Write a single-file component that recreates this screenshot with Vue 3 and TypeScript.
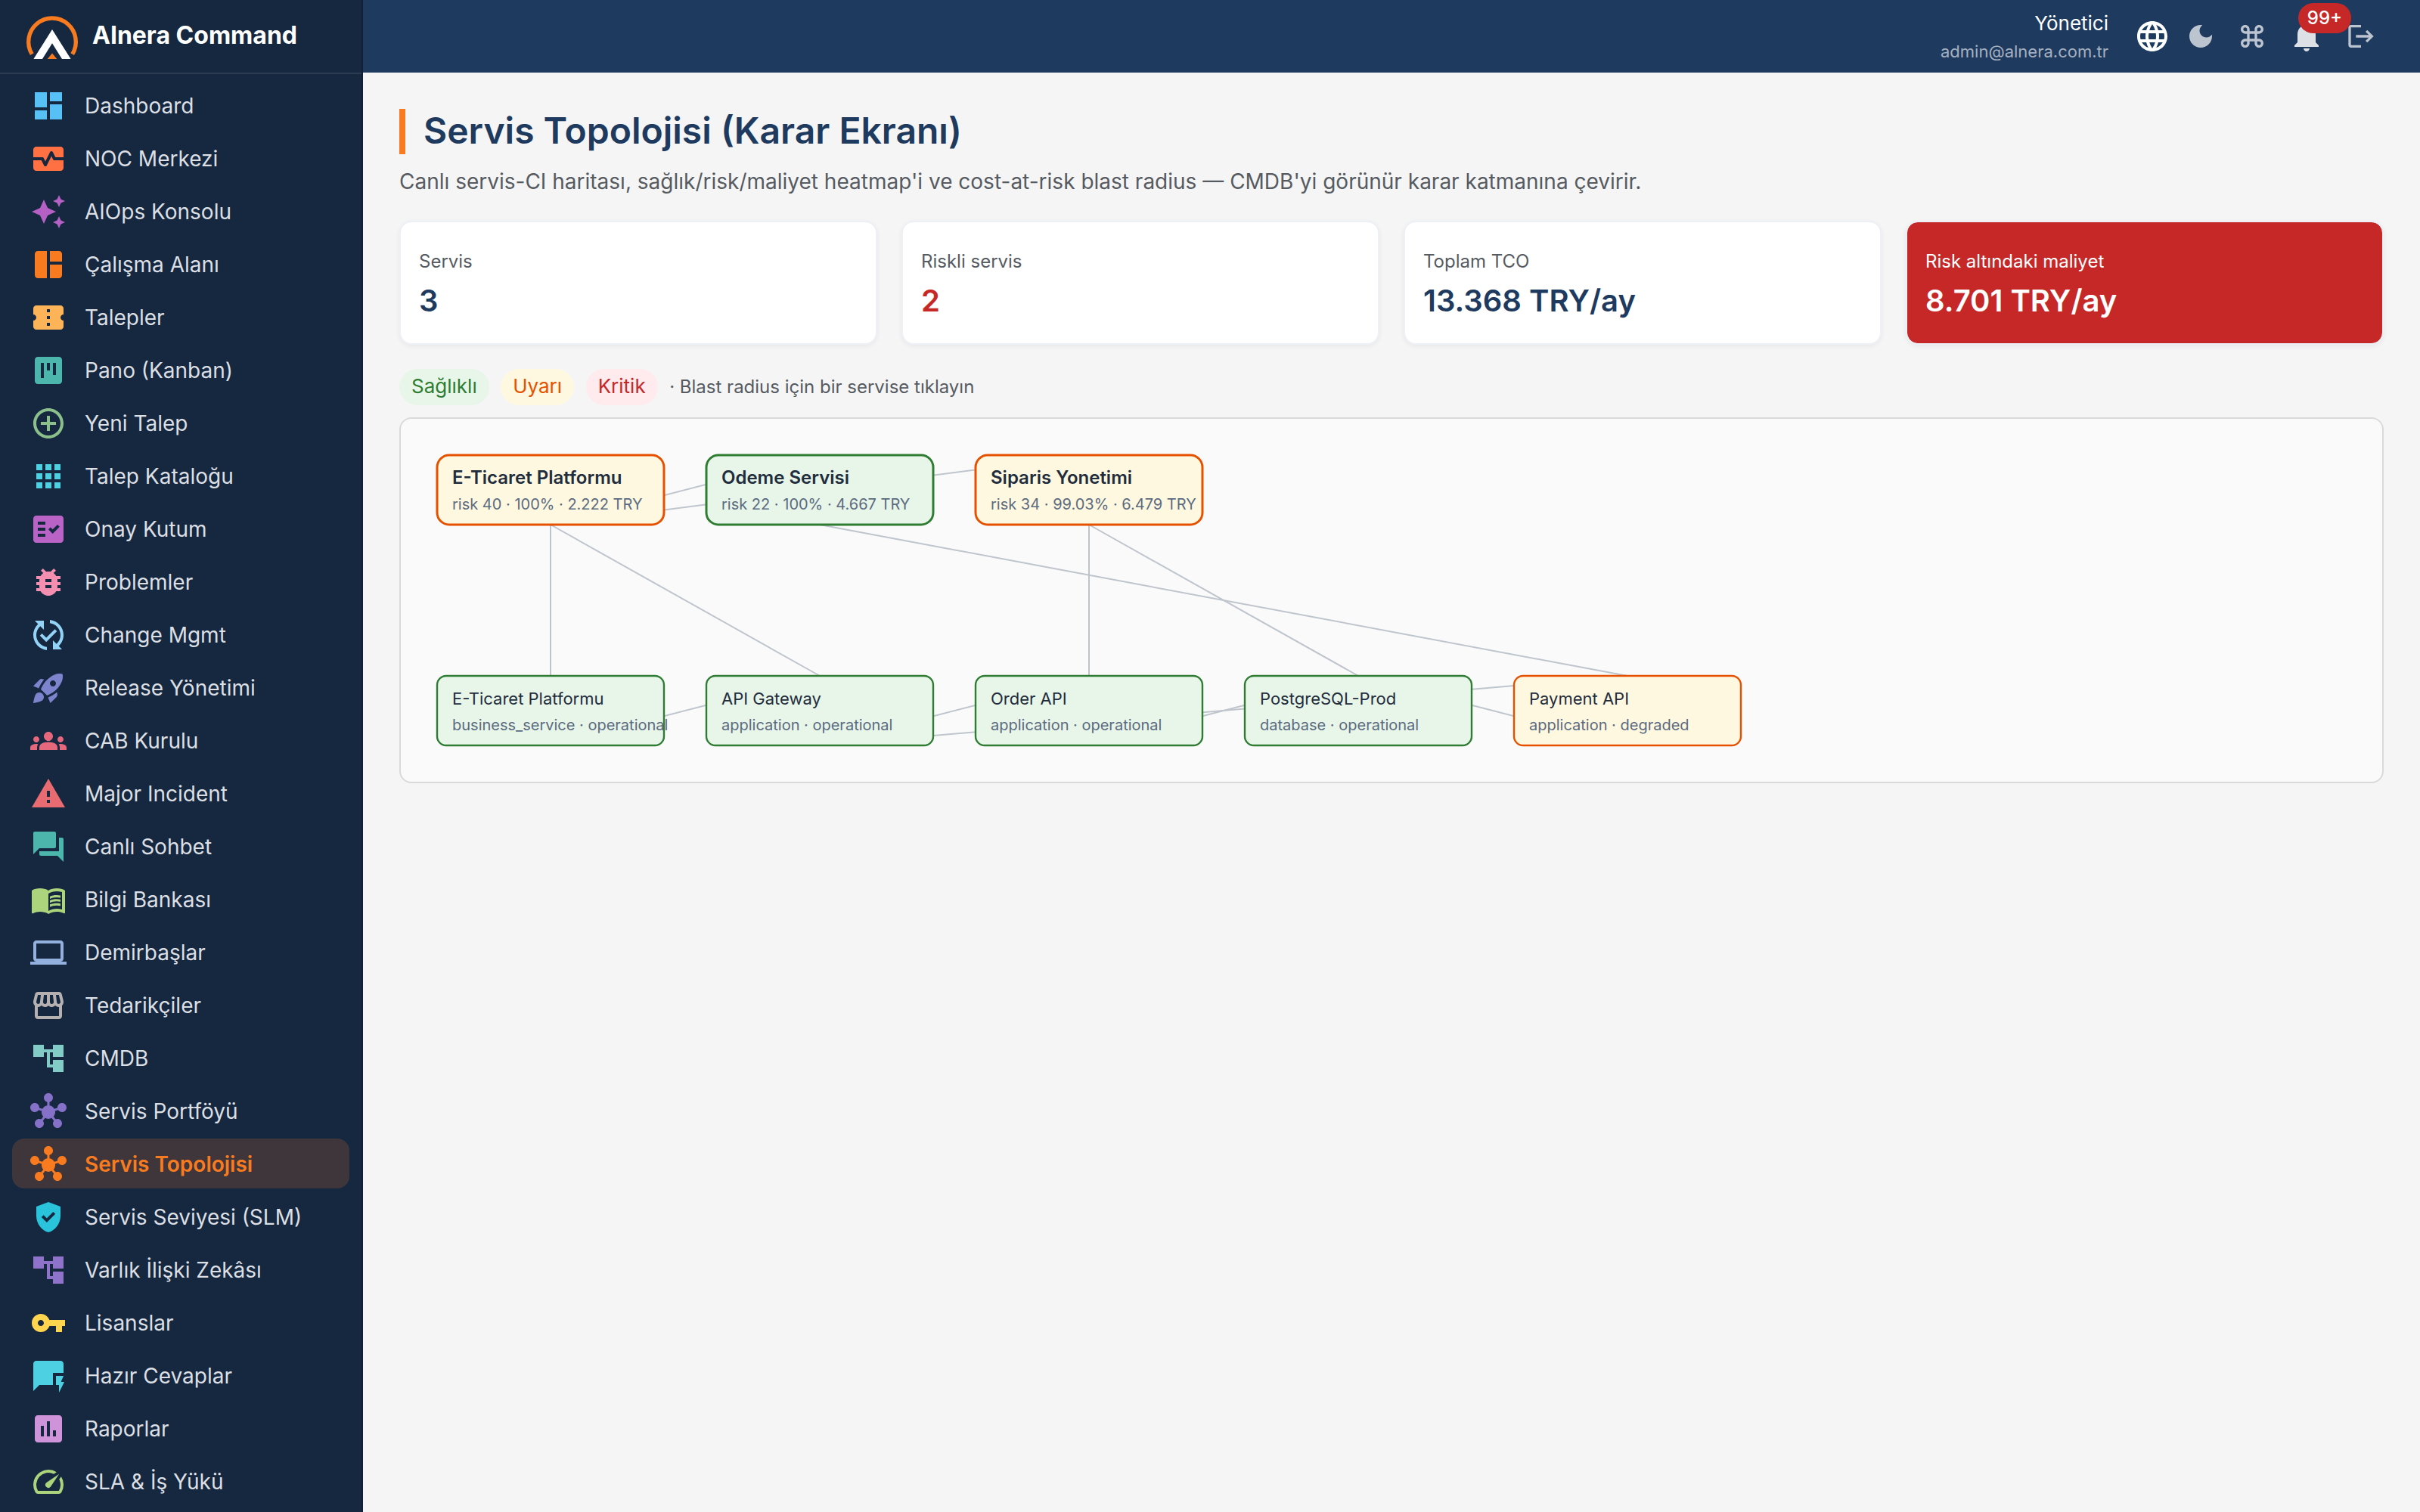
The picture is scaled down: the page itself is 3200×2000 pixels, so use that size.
<script setup lang="ts">
interface MenuItem {
  label: string
  color: string
  icon: string
  active?: boolean
}

interface Kpi {
  label: string
  value: string
  tone: string
}

interface TopologyNode {
  id: string
  name: string
  detail: string
  health: 'ok' | 'warn'
  kind: 'service' | 'ci'
  col: number
}

const HUB =
  'M8.4 18.2c.38.5.6 1.12.6 1.8 0 1.66-1.34 3-3 3s-3-1.34-3-3 1.34-3 3-3c.44 0 .85.09 1.23.26l1.41-1.77c-.92-1.03-1.29-2.39-1.09-3.69l-2.03-.68c-.54.83-1.46 1.38-2.52 1.38-1.66 0-3-1.34-3-3s1.34-3 3-3 3 1.34 3 3c0 .07 0 .14-.01.21l2.03.68c.64-1.21 1.82-2.09 3.22-2.32V5.91C9.96 5.57 9 4.4 9 3c0-1.66 1.34-3 3-3s3 1.34 3 3c0 1.4-.96 2.57-2.25 2.91v2.16c1.4.23 2.58 1.11 3.22 2.32l2.03-.68C18 9.64 18 9.57 18 9.5c0-1.66 1.34-3 3-3s3 1.34 3 3-1.34 3-3 3c-1.06 0-1.98-.55-2.52-1.37l-2.03.68c.2 1.29-.16 2.65-1.09 3.69l1.41 1.77c.38-.18.79-.27 1.23-.27 1.66 0 3 1.34 3 3s-1.34 3-3 3-3-1.34-3-3c0-.68.22-1.3.6-1.8l-1.41-1.77c-1.35.75-3.01.76-4.37 0L8.4 18.2z'
const TREE = 'M22 11V3h-7v3H9V3H2v8h7V8h2v10h4v3h7v-8h-7v3h-2V8h2v3z'

const menu: MenuItem[] = [
  { label: 'Dashboard', color: '#57c1f6', icon: 'M3 13h8V3H3v10zm0 8h8v-6H3v6zm10 0h8V11h-8v10zm0-18v6h8V3h-8z' },
  { label: 'NOC Merkezi', color: '#ff7043', icon: 'M15.11 12.45 14 10.24l-3.11 6.21c-.16.34-.51.55-.89.55s-.73-.21-.89-.55L7.38 13H2v5c0 1.1.9 2 2 2h16c1.1 0 2-.9 2-2v-5h-6c-.38 0-.73-.21-.89-.55zM20 4H4c-1.1 0-2 .9-2 2v5h6c.38 0 .73.21.89.55L10 13.76l3.11-6.21c.34-.68 1.45-.68 1.79 0L16.62 11H22V6c0-1.1-.9-2-2-2z' },
  { label: 'AIOps Konsolu', color: '#b560c4', icon: 'm19 9 1.25-2.75L23 5l-2.75-1.25L19 1l-1.25 2.75L15 5l2.75 1.25L19 9zm-7.5.5L9 4 6.5 9.5 1 12l5.5 2.5L9 20l2.5-5.5L17 12l-5.5-2.5zM19 15l-1.25 2.75L15 19l2.75 1.25L19 23l1.25-2.75L23 19l-2.75-1.25L19 15z' },
  { label: 'Çalışma Alanı', color: '#f97b1f', icon: 'M11 21H5c-1.1 0-2-.9-2-2V5c0-1.1.9-2 2-2h6v18zm2 0h6c1.1 0 2-.9 2-2v-7h-8v9zm8-11V5c0-1.1-.9-2-2-2h-6v7h8z' },
  { label: 'Talepler', color: '#fdb357', icon: 'M22 10V6c0-1.11-.9-2-2-2H4c-1.1 0-1.99.89-1.99 2v4c1.1 0 1.99.9 1.99 2s-.89 2-2 2v4c0 1.1.9 2 2 2h16c1.1 0 2-.9 2-2v-4c-1.1 0-2-.9-2-2s.9-2 2-2zm-9 7.5h-2v-2h2v2zm0-4.5h-2v-2h2v2zm0-4.5h-2v-2h2v2z' },
  { label: 'Pano (Kanban)', color: '#4db6ac', icon: 'M19 3H5c-1.1 0-2 .9-2 2v14c0 1.1.9 2 2 2h14c1.1 0 2-.9 2-2V5c0-1.1-.9-2-2-2zM9 17H7V7h2v10zm4-5h-2V7h2v5zm4 3h-2V7h2v8z' },
  { label: 'Yeni Talep', color: '#8bc08a', icon: 'M13 7h-2v4H7v2h4v4h2v-4h4v-2h-4V7zm-1-5C6.48 2 2 6.48 2 12s4.48 10 10 10 10-4.48 10-10S17.52 2 12 2zm0 18c-4.41 0-8-3.59-8-8s3.59-8 8-8 8 3.59 8 8-3.59 8-8 8z' },
  { label: 'Talep Kataloğu', color: '#4dd0e1', icon: 'M4 8h4V4H4v4zm6 12h4v-4h-4v4zm-6 0h4v-4H4v4zm0-6h4v-4H4v4zm6 0h4v-4h-4v4zm6-10v4h4V4h-4zm-6 4h4V4h-4v4zm6 6h4v-4h-4v4zm0 6h4v-4h-4v4z' },
  { label: 'Onay Kutum', color: '#ba63c6', icon: 'M20 3H4c-1.1 0-2 .9-2 2v14c0 1.1.9 2 2 2h16c1.1 0 2-.9 2-2V5c0-1.1-.9-2-2-2zM10 17H5v-2h5v2zm0-4H5v-2h5v2zm0-4H5V7h5v2zm4.82 6L12 12.16l1.41-1.41 1.41 1.42L17.99 9l1.42 1.42L14.82 15z' },
  { label: 'Problemler', color: '#f48fb1', icon: 'M20 8h-2.81c-.45-.78-1.07-1.45-1.82-1.96L17 4.41 15.59 3l-2.17 2.17C12.96 5.06 12.49 5 12 5c-.49 0-.96.06-1.41.17L8.41 3 7 4.41l1.62 1.63C7.88 6.55 7.26 7.22 6.81 8H4v2h2.09c-.05.33-.09.66-.09 1v1H4v2h2v1c0 .34.04.67.09 1H4v2h2.81c1.04 1.79 2.97 3 5.19 3s4.15-1.21 5.19-3H20v-2h-2.09c.05-.33.09-.66.09-1v-1h2v-2h-2v-1c0-.34-.04-.67-.09-1H20V8zm-6 8h-4v-2h4v2zm0-4h-4v-2h4v2z' },
  { label: 'Change Mgmt', color: '#93d3f6', icon: 'm17.66 9.53-7.07 7.07-4.24-4.24 1.41-1.41 2.83 2.83 5.66-5.66 1.41 1.41zM4 12c0-2.33 1.02-4.42 2.62-5.88L9 8.5v-6H3l2.2 2.2C3.24 6.52 2 9.11 2 12c0 5.19 3.95 9.45 9 9.95v-2.02c-3.94-.49-7-3.86-7-7.93zm18 0c0-5.19-3.95-9.45-9-9.95v2.02c3.94.49 7 3.86 7 7.93 0 2.33-1.02 4.42-2.62 5.88L15 15.5v6h6l-2.2-2.2c1.96-1.82 3.2-4.41 3.2-7.3z' },
  { label: 'Release Yönetimi', color: '#7d83cd', icon: 'M9.19 6.35c-2.04 2.29-3.44 5.58-3.57 5.89L2 10.69l4.05-4.05c.47-.47 1.15-.68 1.81-.55l1.33.26zM11.17 17s3.74-1.55 5.89-3.7c5.4-5.4 4.5-9.62 4.21-10.57-.95-.3-5.17-1.19-10.57 4.21C8.55 9.09 7 12.83 7 12.83L11.17 17zm6.48-2.19c-2.29 2.04-5.58 3.44-5.89 3.57L13.31 22l4.05-4.05c.47-.47.68-1.15.55-1.81l-.26-1.33zM9 18c0 .83-.34 1.58-.88 2.12C6.94 21.3 2 22 2 22s.7-4.94 1.88-6.12C4.42 15.34 5.17 15 6 15c1.66 0 3 1.34 3 3zm4-9c0-1.1.9-2 2-2s2 .9 2 2-.9 2-2 2-2-.9-2-2z' },
  { label: 'CAB Kurulu', color: '#e5687d', icon: 'M12 12.75c1.63 0 3.07.39 4.24.9 1.08.48 1.76 1.56 1.76 2.73V18H6v-1.61c0-1.18.68-2.26 1.76-2.73 1.17-.52 2.61-.91 4.24-.91zM4 13c1.1 0 2-.9 2-2s-.9-2-2-2-2 .9-2 2 .9 2 2 2zm1.13 1.1c-.37-.06-.74-.1-1.13-.1-.99 0-1.93.21-2.78.58C.48 14.9 0 15.62 0 16.43V18h4.5v-1.61c0-.83.23-1.61.63-2.29zM20 13c1.1 0 2-.9 2-2s-.9-2-2-2-2 .9-2 2 .9 2 2 2zm4 3.43c0-.81-.48-1.53-1.22-1.85-.85-.37-1.79-.58-2.78-.58-.39 0-.76.04-1.13.1.4.68.63 1.46.63 2.29V18H24v-1.57zM12 6c1.66 0 3 1.34 3 3s-1.34 3-3 3-3-1.34-3-3 1.34-3 3-3z' },
  { label: 'Major Incident', color: '#e76b70', icon: 'M1 21h22L12 2 1 21zm12-3h-2v-2h2v2zm0-4h-2v-4h2v4z' },
  { label: 'Canlı Sohbet', color: '#4db6ac', icon: 'M21 6h-2v9H6v2c0 .55.45 1 1 1h11l4 4V7c0-.55-.45-1-1-1zM17 12V3c0-.55-.45-1-1-1H3c-.55 0-1 .45-1 1v14l4-4h10c.55 0 1-.45 1-1z' },
  { label: 'Bilgi Bankası', color: '#abd47c', icon: 'M21 5c-1.11-.35-2.33-.5-3.5-.5-1.95 0-4.05.4-5.5 1.5-1.45-1.1-3.55-1.5-5.5-1.5S2.45 4.9 1 6v14.65c0 .25.25.5.5.5.1 0 .15-.05.25-.05C3.1 20.45 5.05 20 6.5 20c1.95 0 4.05.4 5.5 1.5 1.35-.85 3.8-1.5 5.5-1.5 1.65 0 3.35.3 4.75 1.05.1.05.15.05.25.05.25 0 .5-.25.5-.5V6c-.6-.45-1.25-.75-2-1zm0 13.5c-1.1-.35-2.3-.5-3.5-.5-1.7 0-4.15.65-5.5 1.5V8c1.35-.85 3.8-1.5 5.5-1.5 1.2 0 2.4.15 3.5.5v11.5zM17.5 10.5c.88 0 1.73.09 2.5.26V9.24c-.79-.15-1.64-.24-2.5-.24-1.7 0-3.24.29-4.5.83v1.66c1.13-.64 2.7-.99 4.5-.99zM13 12.49v1.66c1.13-.64 2.7-.99 4.5-.99.88 0 1.73.09 2.5.26V11.9c-.79-.15-1.64-.24-2.5-.24-1.7 0-3.24.3-4.5.83zm4.5 1.84c-1.7 0-3.24.29-4.5.83v1.66c1.13-.64 2.7-.99 4.5-.99.88 0 1.73.09 2.5.26v-1.52c-.79-.16-1.64-.24-2.5-.24z' },
  { label: 'Demirbaşlar', color: '#94b0de', icon: 'M20 18c1.1 0 1.99-.9 1.99-2L22 6c0-1.1-.9-2-2-2H4c-1.1 0-2 .9-2 2v10c0 1.1.9 2 2 2H0v2h24v-2h-4zM4 6h16v10H4V6z' },
  { label: 'Tedarikçiler', color: '#b4b1b0', icon: 'M21.9 8.89l-1.05-4.37c-.22-.9-1-1.52-1.91-1.52H5.05c-.9 0-1.69.63-1.9 1.52L2.1 8.89c-.24 1.02-.02 2.06.62 2.88.08.11.19.19.28.29V19c0 1.1.9 2 2 2h14c1.1 0 2-.9 2-2v-6.94c.09-.09.2-.18.28-.28.64-.82.87-1.87.62-2.89zm-2.99-3.9l1.05 4.37c.1.42.01.84-.25 1.17-.14.18-.44.47-.94.47-.61 0-1.14-.49-1.21-1.14L16.98 5l1.93-.01zM13 5h1.96l.54 4.52c.05.39-.07.78-.33 1.07-.22.26-.54.41-.95.41-.67 0-1.22-.59-1.22-1.31V5zM8.49 9.52L9.04 5H11v4.69c0 .72-.55 1.31-1.29 1.31-.34 0-.65-.15-.89-.41-.25-.29-.37-.68-.33-1.07zm-4.45-.16L5.05 5h1.97l-.58 4.86c-.08.65-.6 1.14-1.21 1.14-.49 0-.8-.29-.93-.47-.27-.32-.36-.75-.26-1.17zM5 19v-6.03c.08.01.15.03.23.03.87 0 1.66-.36 2.24-.95.6.6 1.4.95 2.31.95.87 0 1.65-.36 2.23-.93.59.57 1.39.93 2.29.93.84 0 1.64-.35 2.24-.95.58.59 1.37.95 2.24.95.08 0 .15-.02.23-.03V19H5z' },
  { label: 'CMDB', color: '#83cbc6', icon: TREE },
  { label: 'Servis Portföyü', color: '#8671c8', icon: HUB },
  { label: 'Servis Topolojisi', color: '#f97b1f', icon: HUB, active: true },
  { label: 'Servis Seviyesi (SLM)', color: '#29c3dc', icon: 'M12 2 4 5v6.09c0 5.05 3.41 9.76 8 10.91 4.59-1.15 8-5.86 8-10.91V5l-8-3zm-1.06 13.54L7.4 12l1.41-1.41 2.12 2.12 4.24-4.24 1.41 1.41-5.64 5.66z' },
  { label: 'Varlık İlişki Zekâsı', color: '#8f73cb', icon: TREE },
  { label: 'Lisanslar', color: '#ffd54f', icon: 'M12.65 10C11.83 7.67 9.61 6 7 6c-3.31 0-6 2.69-6 6s2.69 6 6 6c2.61 0 4.83-1.67 5.65-4H17v4h4v-4h2v-4H12.65zM7 14c-1.1 0-2-.9-2-2s.9-2 2-2 2 .9 2 2-.9 2-2 2z' },
  { label: 'Hazır Cevaplar', color: '#4dd0e1', icon: 'M22 4c0-1.1-.9-2-2-2H4c-1.1 0-1.99.9-1.99 2L2 22l4-4h9v-8h7V4zM22.5 16h-2.2l1.7-4h-5v6h2v5l3.5-7z' },
  { label: 'Raporlar', color: '#ce93d8', icon: 'M19 3H5c-1.1 0-2 .9-2 2v14c0 1.1.9 2 2 2h14c1.1 0 2-.9 2-2V5c0-1.1-.9-2-2-2zM9 17H7v-7h2v7zm4 0h-2V7h2v10zm4 0h-2v-4h2v4z' },
  { label: 'SLA & İş Yükü', color: '#abd47c', icon: 'm20.38 8.57-1.23 1.85a8 8 0 0 1-.22 7.58H5.07A8 8 0 0 1 15.58 6.85l1.85-1.23A10 10 0 0 0 3.35 19a2 2 0 0 0 1.72 1h13.85a2 2 0 0 0 1.74-1 10 10 0 0 0-.27-10.44zm-9.79 6.84a2 2 0 0 0 2.83 0l5.66-8.49-8.49 5.66a2 2 0 0 0 0 2.83z' },
]

const kpis: Kpi[] = [
  { label: 'Servis', value: '3', tone: 'plain' },
  { label: 'Riskli servis', value: '2', tone: 'danger' },
  { label: 'Toplam TCO', value: '13.368 TRY/ay', tone: 'plain' },
  { label: 'Risk altındaki maliyet', value: '8.701 TRY/ay', tone: 'filled' },
]

const NODE_W = 300
const NODE_H = 92
const nodeX = (n: TopologyNode) => 48 + n.col * 356
const nodeY = (n: TopologyNode) => (n.kind === 'service' ? 48 : 340)

const nodes: TopologyNode[] = [
  { id: 's1', name: 'E-Ticaret Platformu', detail: 'risk 40 · 100% · 2.222 TRY', health: 'warn', kind: 'service', col: 0 },
  { id: 's2', name: 'Odeme Servisi', detail: 'risk 22 · 100% · 4.667 TRY', health: 'ok', kind: 'service', col: 1 },
  { id: 's3', name: 'Siparis Yonetimi', detail: 'risk 34 · 99.03% · 6.479 TRY', health: 'warn', kind: 'service', col: 2 },
  { id: 'c1', name: 'E-Ticaret Platformu', detail: 'business_service · operational', health: 'ok', kind: 'ci', col: 0 },
  { id: 'c2', name: 'API Gateway', detail: 'application · operational', health: 'ok', kind: 'ci', col: 1 },
  { id: 'c3', name: 'Order API', detail: 'application · operational', health: 'ok', kind: 'ci', col: 2 },
  { id: 'c4', name: 'PostgreSQL-Prod', detail: 'database · operational', health: 'ok', kind: 'ci', col: 3 },
  { id: 'c5', name: 'Payment API', detail: 'application · degraded', health: 'warn', kind: 'ci', col: 4 },
]

const links: [string, string][] = [
  ['s1', 's2'],
  ['s1', 's3'],
  ['s1', 'c1'],
  ['s1', 'c2'],
  ['s2', 'c5'],
  ['s3', 'c3'],
  ['s3', 'c4'],
  ['c1', 'c2'],
  ['c2', 'c3'],
  ['c2', 'c5'],
  ['c3', 'c4'],
  ['c5', 'c4'],
]

const byId = (id: string) => nodes.find((n) => n.id === id)!

// Each link leaves the bottom centre of one node and enters the top centre of the other.
// The c5 → c4 dependency is stored upwards, so it runs from Payment API's bottom to PostgreSQL's top.
const edges = links.map(([from, to]) => {
  const a = byId(from)
  const b = byId(to)
  return {
    key: from + to,
    x1: nodeX(a) + NODE_W / 2,
    y1: nodeY(a) + NODE_H,
    x2: nodeX(b) + NODE_W / 2,
    y2: nodeY(b),
  }
})
</script>

<template>
  <div class="shell">
    <aside class="sidebar">
      <div class="brand">
        <svg class="logo" viewBox="0 0 72 60" aria-hidden="true">
          <path d="M9.3 51.6A31.3 31.3 0 1 1 62.7 51.6" fill="none" stroke="#f97b1f" stroke-width="5.4" />
          <path d="M36 19 60.6 58H49L36 37.2 23 58H11.4z" fill="#fff" />
          <path d="M36 50.4 42.3 58H29.7z" fill="#f97b1f" />
        </svg>
        <span class="brand-name">AInera Command</span>
      </div>
      <nav class="menu">
        <a v-for="item in menu" :key="item.label" class="menu-item" :class="{ active: item.active }">
          <svg class="menu-icon" viewBox="0 0 24 24" :fill="item.color" aria-hidden="true">
            <path :d="item.icon" />
          </svg>
          <span>{{ item.label }}</span>
        </a>
      </nav>
    </aside>

    <div class="body">
      <header class="appbar">
        <div class="user">
          <span class="user-name">Yönetici</span>
          <span class="user-mail">admin@alnera.com.tr</span>
        </div>
        <svg class="i-globe" viewBox="0 0 24 24"><path d="M11.99 2C6.47 2 2 6.48 2 12s4.47 10 9.99 10C17.52 22 22 17.52 22 12S17.52 2 11.99 2zm6.93 6h-2.95c-.32-1.25-.78-2.45-1.38-3.56 1.84.63 3.37 1.91 4.33 3.56zM12 4.04c.83 1.2 1.48 2.53 1.91 3.96h-3.82c.43-1.43 1.08-2.76 1.91-3.96zM4.26 14C4.1 13.36 4 12.69 4 12s.1-1.36.26-2h3.38c-.08.66-.14 1.32-.14 2 0 .68.06 1.34.14 2H4.26zm.82 2h2.95c.32 1.25.78 2.45 1.38 3.56-1.84-.63-3.37-1.9-4.33-3.56zm2.95-8H5.08c.96-1.66 2.49-2.93 4.33-3.56C8.81 5.55 8.35 6.75 8.03 8zM12 19.96c-.83-1.2-1.48-2.53-1.91-3.96h3.82c-.43 1.43-1.08 2.76-1.91 3.96zM14.34 14H9.66c-.09-.66-.16-1.32-.16-2 0-.68.07-1.35.16-2h4.68c.09.65.16 1.32.16 2 0 .68-.07 1.34-.16 2zm.25 5.56c.6-1.11 1.06-2.31 1.38-3.56h2.95c-.96 1.65-2.49 2.93-4.33 3.56zM16.36 14c.08-.66.14-1.32.14-2 0-.68-.06-1.34-.14-2h3.38c.16.64.26 1.31.26 2s-.1 1.36-.26 2h-3.38z" /></svg>
        <svg class="i-moon" viewBox="0 0 24 24"><path d="M12 3c-4.97 0-9 4.03-9 9s4.03 9 9 9 9-4.03 9-9c0-.46-.04-.92-.1-1.36-.98 1.37-2.58 2.26-4.4 2.26-2.98 0-5.4-2.42-5.4-5.4 0-1.81.89-3.42 2.26-4.4-.44-.06-.9-.1-1.36-.1z" /></svg>
        <svg class="i-cmd" viewBox="0 0 24 24"><path d="M17.5 3C15.57 3 14 4.57 14 6.5V8h-4V6.5C10 4.57 8.43 3 6.5 3S3 4.57 3 6.5 4.57 10 6.5 10H8v4H6.5C4.57 14 3 15.57 3 17.5S4.57 21 6.5 21s3.5-1.57 3.5-3.5V16h4v1.5c0 1.93 1.57 3.5 3.5 3.5s3.5-1.57 3.5-3.5-1.57-3.5-3.5-3.5H16v-4h1.5c1.93 0 3.5-1.57 3.5-3.5S19.43 3 17.5 3zM16 8V6.5c0-.83.67-1.5 1.5-1.5s1.5.67 1.5 1.5S18.33 8 17.5 8H16zM6.5 8C5.67 8 5 7.33 5 6.5S5.67 5 6.5 5 8 5.67 8 6.5V8H6.5zm3.5 6v-4h4v4h-4zm7.5 5c-.83 0-1.5-.67-1.5-1.5V16h1.5c.83 0 1.5.67 1.5 1.5s-.67 1.5-1.5 1.5zm-11 0c-.83 0-1.5-.67-1.5-1.5S5.67 16 6.5 16H8v1.5c0 .83-.67 1.5-1.5 1.5z" /></svg>
        <div class="bell">
          <svg viewBox="0 0 24 24"><path d="M12 22c1.1 0 2-.9 2-2h-4c0 1.1.89 2 2 2zm6-6v-5c0-3.07-1.64-5.64-4.5-6.32V4c0-.83-.67-1.5-1.5-1.5s-1.5.67-1.5 1.5v.68C7.63 5.36 6 7.92 6 11v5l-2 2v1h16v-1l-2-2z" /></svg>
          <span class="badge">99+</span>
        </div>
        <svg class="i-exit" viewBox="0 0 24 24"><path d="m17 7-1.41 1.41L18.17 11H8v2h10.17l-2.58 2.58L17 17l5-5zM4 5h8V3H4c-1.1 0-2 .9-2 2v14c0 1.1.9 2 2 2h8v-2H4z" /></svg>
      </header>

      <main class="content">
        <h1 class="title">Servis Topolojisi (Karar Ekranı)</h1>
        <p class="subtitle">Canlı servis-CI haritası, sağlık/risk/maliyet heatmap'i ve cost-at-risk blast radius — CMDB'yi görünür karar katmanına çevirir.</p>

        <section class="kpis">
          <article v-for="kpi in kpis" :key="kpi.label" class="kpi" :class="kpi.tone">
            <span class="kpi-label">{{ kpi.label }}</span>
            <span class="kpi-value">{{ kpi.value }}</span>
          </article>
        </section>

        <div class="legend">
          <span class="chip ok">Sağlıklı</span>
          <span class="chip warn">Uyarı</span>
          <span class="chip crit">Kritik</span>
          <span class="hint">· Blast radius için bir servise tıklayın</span>
        </div>

        <section class="panel">
          <svg class="graph" width="2620" height="480" viewBox="0 0 2620 480">
            <line v-for="e in edges" :key="e.key" class="edge" :x1="e.x1" :y1="e.y1" :x2="e.x2" :y2="e.y2" />
            <g v-for="n in nodes" :key="n.id" :class="['node', n.kind, n.health]">
              <rect :x="nodeX(n)" :y="nodeY(n)" :width="NODE_W" :height="NODE_H" :rx="n.kind === 'service' ? 16 : 12" />
              <text class="name" :x="nodeX(n) + 20" :y="nodeY(n) + 38">{{ n.name }}</text>
              <text class="detail" :x="nodeX(n) + 20" :y="nodeY(n) + 72">{{ n.detail }}</text>
            </g>
          </svg>
        </section>
      </main>
    </div>
  </div>
</template>

<style>
body {
  background: #f5f5f5;
  overflow: hidden;
}
</style>

<style scoped>
.shell {
  display: flex;
  height: 2000px;
  overflow: hidden;
  background: #f5f5f5;
  font-family: Inter, "Noto Sans", sans-serif;
}

.sidebar {
  box-sizing: border-box;
  flex: 0 0 480px;
  height: 2000px;
  overflow: hidden;
  background: #152840;
  border-right: 2px solid #112036;
}

.brand {
  display: flex;
  align-items: flex-start;
  box-sizing: border-box;
  height: 98px;
  padding-left: 33px;
  border-bottom: 2px solid #2c3d53;
}

.logo {
  width: 72px;
  height: 60px;
  margin-top: 20px;
}

.brand-name {
  margin: 23px 0 0 17px;
  color: #fff;
  font-size: 32px;
  font-weight: 700;
  line-height: 48px;
}

.menu {
  display: flex;
  flex-direction: column;
  gap: 4px;
  padding: 8px 16px 0;
}

.menu-item {
  display: flex;
  flex: 0 0 66px;
  align-items: center;
  gap: 24px;
  box-sizing: border-box;
  height: 66px;
  padding: 2px 24px 0;
  border-radius: 16px;
  color: #dcdfe3;
  font-size: 28px;
  line-height: 40px;
  white-space: nowrap;
}

.menu-item.active {
  background: #3e363b;
  color: #f97b1f;
  font-weight: 600;
}

.menu-icon {
  flex: 0 0 48px;
  height: 48px;
}

.body {
  display: flex;
  flex: 1;
  flex-direction: column;
  min-width: 0;
}

.appbar {
  display: flex;
  flex: 0 0 96px;
  align-items: center;
  justify-content: flex-end;
  box-sizing: border-box;
  padding-right: 58px;
  background: #1e3a5f;
}

.appbar svg {
  display: block;
  width: 40px;
  height: 40px;
  fill: #bcc4cf;
}

.user {
  display: flex;
  flex-direction: column;
  align-items: flex-end;
  margin-right: 34px;
  padding-top: 2px;
}

.user-name {
  color: #fff;
  font-size: 26px;
  line-height: 38px;
}

.user-mail {
  color: #a5b0bf;
  font-size: 22px;
  line-height: 36px;
}

.appbar .i-globe {
  width: 48px;
  height: 48px;
  margin-right: 20px;
  fill: #fff;
}

.i-moon,
.i-cmd {
  margin-right: 28px;
}

.bell {
  position: relative;
  margin-right: 28px;
}

.appbar .bell svg {
  width: 48px;
  height: 48px;
  fill: #dde1e6;
}

.badge {
  position: absolute;
  top: -20px;
  left: 13px;
  box-sizing: border-box;
  width: 70px;
  height: 40px;
  border-radius: 20px;
  background: #c62828;
  color: #fff;
  font-size: 24px;
  font-weight: 500;
  line-height: 39px;
  text-align: center;
}

.content {
  padding: 48px;
}

.title {
  margin: 0;
  padding: 0 0 2px 24px;
  border-left: 8px solid #f97b1f;
  color: #1e3a5f;
  font-size: 48px;
  font-weight: 600;
  line-height: 58px;
}

.subtitle {
  margin: 16px 0 32px;
  color: #565b62;
  font-size: 28px;
  line-height: 40px;
}

.kpis {
  display: grid;
  grid-template-columns: repeat(4, 1fr);
  gap: 32px;
}

.kpi {
  display: flex;
  flex-direction: column;
  box-sizing: border-box;
  height: 164px;
  padding: 32px 24px 24px;
  border: 2px solid #edf0f5;
  border-radius: 16px;
  background: #fff;
  background-clip: padding-box;
  box-shadow: 0 2px 6px rgba(0, 0, 0, 0.06);
}

.kpi-label {
  color: #565b62;
  font-size: 24px;
  line-height: 40px;
}

.kpi-value {
  color: #1e3a5f;
  font-size: 40px;
  font-weight: 600;
  line-height: 64px;
}

.danger .kpi-value {
  color: #c62828;
}

.filled {
  background-color: #c62828;
}

.filled .kpi-label,
.filled .kpi-value {
  color: #fff;
}

.legend {
  display: flex;
  align-items: center;
  gap: 15.5px;
  margin: 32px 0 16px;
}

.chip {
  box-sizing: border-box;
  height: 48px;
  padding: 0 16px;
  border-radius: 24px;
  font-size: 26px;
  line-height: 46px;
}

.chip.ok {
  background: #e8f5e9;
  color: #2e7d32;
}

.chip.warn {
  background: #fff8e1;
  color: #e65100;
}

.chip.crit {
  background: #ffebee;
  color: #c62828;
}

.hint {
  color: #565b62;
  font-size: 24px;
  line-height: 40px;
}

.panel {
  height: 480px;
  overflow: hidden;
  border: 2px solid #dadada;
  border-radius: 16px;
  background: #fafafa;
}

.graph {
  display: block;
}

.edge {
  stroke: #bfc5cd;
  stroke-width: 2;
}

.ok rect {
  fill: #e8f5e9;
  stroke: #2e7d32;
}

.warn rect {
  fill: #fff8e1;
  stroke: #e65100;
}

.service rect {
  stroke-width: 3;
}

.ci rect {
  stroke-width: 2.4;
}

.name {
  fill: #1f2d3d;
  font-size: 22px;
}

.service .name {
  font-size: 24px;
  font-weight: 600;
}

.detail {
  fill: #5b6b80;
  font-size: 20px;
}
</style>
